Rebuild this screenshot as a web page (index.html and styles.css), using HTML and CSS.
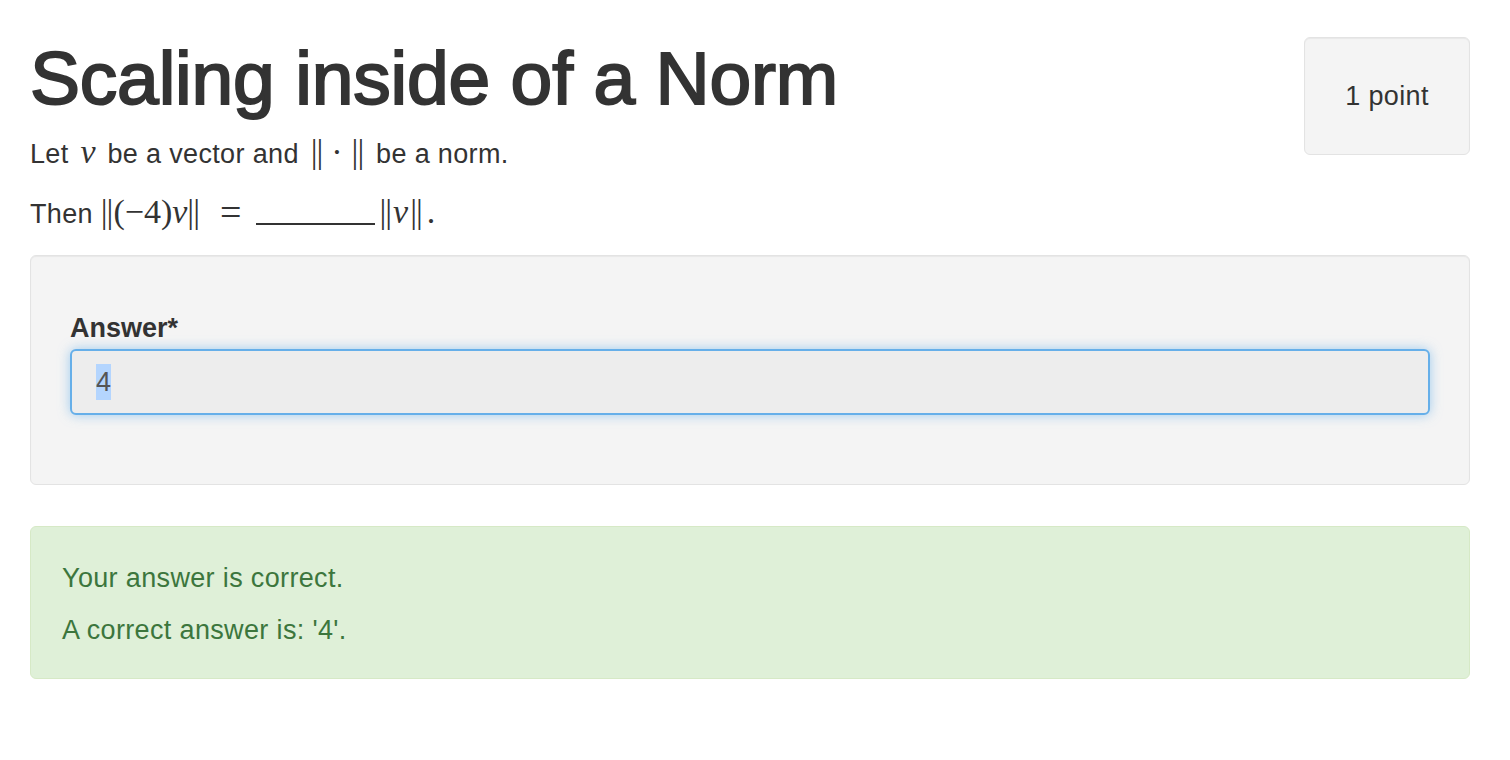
FILE: index.html
```html
<!DOCTYPE html>
<html>
<head>
<meta charset="utf-8">
<link rel="stylesheet" href="styles.css">
</head>
<body>
<div class="page">
  <div class="header">
    <div class="question">
      <h1 class="title">Scaling inside of a Norm</h1>
      <p class="line">Let <span class="m mi sp">v</span> be a vector and <span class="m sp"><span class="bars">||</span><span class="op">·</span><span class="bars">||</span></span> be a norm.</p>
      <p class="line">Then <span class="m"><span class="bars">||</span>(−4)<span class="mi">v</span><span class="bars">||</span><span class="rel">=</span><span class="blank"></span><span class="bars bw">||</span><span class="mi">v</span><span class="bars bw">||</span><span class="dot">.</span></span></p>
    </div>
    <div class="points">1 point</div>
  </div>
  <div class="well">
    <label class="label">Answer*</label>
    <div class="input"><span class="sel">4</span></div>
  </div>
  <div class="alert">
    <p>Your answer is correct.</p>
    <p>A correct answer is: '4'.</p>
  </div>
</div>
</body>
</html>
```
FILE: styles.css
```css
html, body {
  margin: 0;
  padding: 0;
  background: #fff;
}
body {
  font-family: "Liberation Sans", Arial, sans-serif;
  font-size: 27px;
  line-height: 38px;
  color: #333;
  letter-spacing: 0.35px;
}
.page {
  padding: 0 40px 0 30px;
}
.header {
  display: flex;
  justify-content: space-between;
  align-items: flex-start;
}
.question {
  flex: 1;
}
.title {
  margin: 36px 0 15px 0;
  font-size: 75px;
  line-height: 84px;
  font-weight: normal;
  -webkit-text-stroke: 2px #333;
  letter-spacing: -0.2px;
  color: #333;
}
.line {
  margin: 0 0 22px 0;
  white-space: nowrap;
}
.m {
  font-family: "Liberation Serif", "Times New Roman", serif;
  font-size: 34px;
  line-height: 20px;
  letter-spacing: 0;
}
.sp {
  margin: 0 4px;
}
.mi {
  font-style: italic;
}
.bars {
  letter-spacing: -1px;
  margin-right: 1px;
}
.bw {
  margin: 0 2px;
}
.dot {
  margin-left: 3px;
}
.op {
  margin: 0 9px 0 8px;
}
.rel {
  font-size: 38px;
  line-height: 20px;
  margin: 0 15px 0 20px;
  position: relative;
  top: 2px;
}
.blank {
  display: inline-block;
  width: 119px;
  height: 2px;
  background: #333;
  vertical-align: -2px;
  margin-right: 2px;
}
.points {
  margin-top: 37px;
  width: 166px;
  height: 118px;
  box-sizing: border-box;
  background: #f4f4f4;
  border: 1px solid #e3e3e3;
  border-radius: 6px;
  display: flex;
  align-items: center;
  justify-content: center;
  box-shadow: inset 0 1px 1px rgba(0,0,0,0.05);
}
.well {
  background: #f4f4f4;
  border: 1px solid #e3e3e3;
  border-radius: 6px;
  padding: 53px 39px 69px 39px;
  box-shadow: inset 0 1px 1px rgba(0,0,0,0.05);
}
.label {
  display: block;
  font-weight: bold;
  margin-bottom: 2px;
  letter-spacing: 0;
}
.input {
  height: 66px;
  box-sizing: border-box;
  border: 2px solid #66afe9;
  border-radius: 6px;
  background: #ededed;
  padding: 0 24px;
  display: flex;
  align-items: center;
  box-shadow: 0 0 12px rgba(102,175,233,0.6);
  color: #555;
}
.sel {
  background: #b4d5fe;
  line-height: 36px;
}
.alert {
  margin-top: 41px;
  background: #dff0d8;
  border: 1px solid #d6e9c6;
  border-radius: 6px;
  color: #3c763d;
  padding: 32px 31px 29px 31px;
}
.alert p {
  margin: 0 0 14px 0;
}
.alert p:last-child {
  margin-bottom: 0;
}
```
